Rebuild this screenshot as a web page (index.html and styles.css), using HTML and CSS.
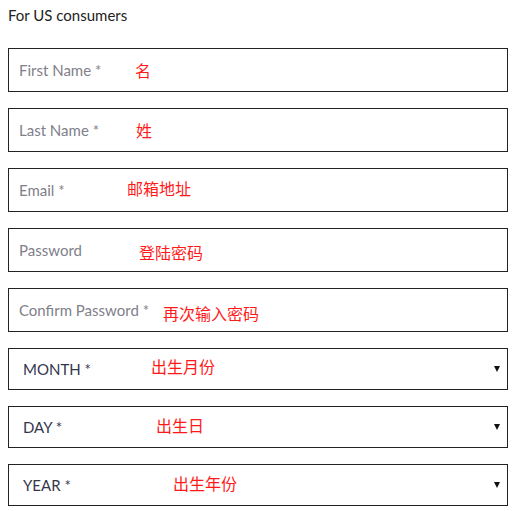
FILE: index.html
```html
<!DOCTYPE html>
<html>
<head>
    <title>Create account</title>
    <link rel="stylesheet" href="styles.css">
</head>
<body>
    <form class="signup">
        <p class="region">For US consumers</p>
        <div class="field">
            <input type="text" placeholder="First Name *">
            <span class="note note-first">名</span>
        </div>
        <div class="field">
            <input type="text" placeholder="Last Name *">
            <span class="note note-last">姓</span>
        </div>
        <div class="field">
            <input type="email" placeholder="Email *">
            <span class="note note-email">邮箱地址</span>
        </div>
        <div class="field">
            <input type="password" placeholder="Password">
            <span class="note note-pass">登陆密码</span>
        </div>
        <div class="field">
            <input type="password" placeholder="Confirm Password *">
            <span class="note note-confirm">再次输入密码</span>
        </div>
        <div class="field select-field">
            <select><option>MONTH *</option></select>
            <span class="note note-month">出生月份</span>
        </div>
        <div class="field select-field">
            <select><option>DAY *</option></select>
            <span class="note note-day">出生日</span>
        </div>
        <div class="field select-field">
            <select><option>YEAR *</option></select>
            <span class="note note-year">出生年份</span>
        </div>
    </form>
</body>
</html>
```

FILE: styles.css
```css
body {
    margin: 0;
    padding: 0 11px 0 8px;
    font-family: Lato, "Open Sans", sans-serif;
    background-color: #fff;
    color: #333;
}
.signup {
    display: flex;
    flex-direction: column;
    gap: 16px;
}
.region {
    margin: 0 0 8px;
    padding-top: 7px;
    height: 17px;
    font-size: 15px;
    line-height: 17px;
    color: #222;
}
.field {
    position: relative;
}
.field input,
.field select {
    display: block;
    width: 100%;
    box-sizing: border-box;
    border: 1px solid #222;
    border-radius: 0;
    background: #fff;
    font-family: Lato, "Open Sans", sans-serif;
    font-size: 15px;
    outline: none;
}
.field input {
    height: 44px;
    padding: 0 10px;
}
.field input::placeholder {
    color: #80808a;
}
.field select {
    height: 42px;
    padding: 0 14px;
    color: #34364e;
    appearance: none;
    -webkit-appearance: none;
}
.select-field::after {
    content: "";
    position: absolute;
    right: 8px;
    top: 18px;
    border-left: 3px solid transparent;
    border-right: 3px solid transparent;
    border-top: 6px solid #111;
}
.note {
    position: absolute;
    color: #ff1a1a;
    font-family: "Noto Sans CJK SC", sans-serif;
    font-size: 16px;
    line-height: 20px;
    pointer-events: none;
}
.note-first { left: 127px; top: 12px; }
.note-last { left: 128px; top: 12px; }
.note-email { left: 119px; top: 10px; }
.note-pass { left: 131px; top: 14px; }
.note-confirm { left: 155px; top: 15px; }
.note-month { left: 143px; top: 8px; }
.note-day { left: 148px; top: 9px; }
.note-year { left: 165px; top: 9px; }
```
